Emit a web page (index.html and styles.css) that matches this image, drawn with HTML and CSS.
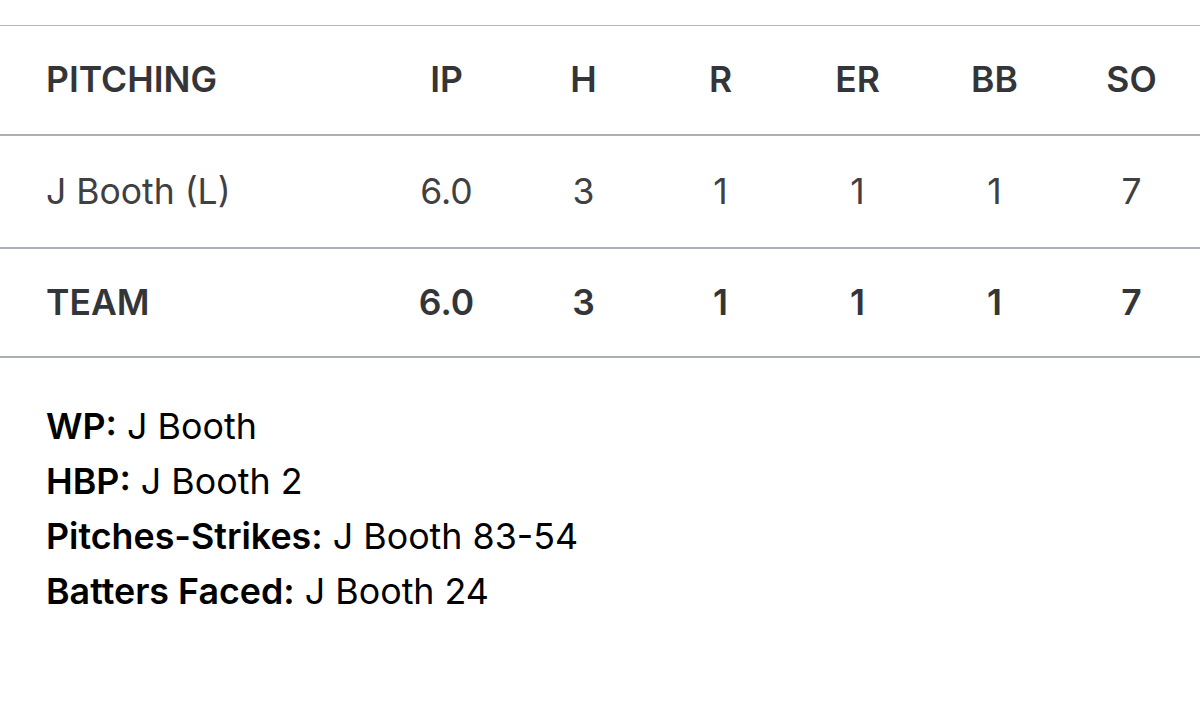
FILE: index.html
```html
<!DOCTYPE html>
<html>
<head>
<meta charset="utf-8">
<link rel="stylesheet" href="styles.css">
</head>
<body>
<div class="page">
  <table class="box">
    <colgroup>
      <col class="c-name">
      <col class="c-stat"><col class="c-stat"><col class="c-stat">
      <col class="c-stat"><col class="c-stat"><col class="c-stat">
    </colgroup>
    <thead>
      <tr class="head">
        <th class="name">PITCHING</th>
        <th>IP</th><th>H</th><th>R</th><th>ER</th><th>BB</th><th>SO</th>
      </tr>
    </thead>
    <tbody>
      <tr class="row">
        <td class="name">J Booth (L)</td>
        <td>6.0</td><td>3</td><td>1</td><td>1</td><td>1</td><td>7</td>
      </tr>
      <tr class="row team">
        <td class="name">TEAM</td>
        <td>6.0</td><td>3</td><td>1</td><td>1</td><td>1</td><td>7</td>
      </tr>
    </tbody>
  </table>
  <div class="notes">
    <p class="note"><b>WP:</b> J Booth</p>
    <p class="note"><b>HBP:</b> J Booth 2</p>
    <p class="note"><b>Pitches-Strikes:</b> J Booth 83-54</p>
    <p class="note"><b>Batters Faced:</b> J Booth 24</p>
  </div>
</div>
</body>
</html>
```

FILE: styles.css
```css
html, body {
  margin: 0;
  padding: 0;
  background: #ffffff;
}
body {
  font-family: Inter, "Liberation Sans", Arial, sans-serif;
}
.page {
  width: 1200px;
  padding-top: 25px;
}
.box {
  width: 1200px;
  border-collapse: collapse;
  table-layout: fixed;
  border-top: 1px solid #b7b7b7;
}
.c-name { width: 378px; }
.c-stat { width: 137px; }
.box th, .box td {
  font-size: 35.5px;
  text-align: center;
  padding: 0;
  line-height: 40px;
}
.box .name {
  text-align: left;
  padding-left: 46px;
}
.head th {
  height: 108px;
  font-weight: 600;
  color: #333538;
  border-bottom: 2px solid #abb0b6;
}
.row td {
  height: 111px;
  font-weight: 400;
  color: #3f4042;
  border-bottom: 2px solid #abb0b6;
}
.row.team td {
  font-weight: 600;
  color: #333538;
  height: 107px;
}
.notes {
  padding: 41px 0 0 46px;
}
.note {
  margin: 0;
  font-size: 35.8px;
  line-height: 55px;
  color: #000000;
}
.note b {
  font-weight: 600;
}
```
